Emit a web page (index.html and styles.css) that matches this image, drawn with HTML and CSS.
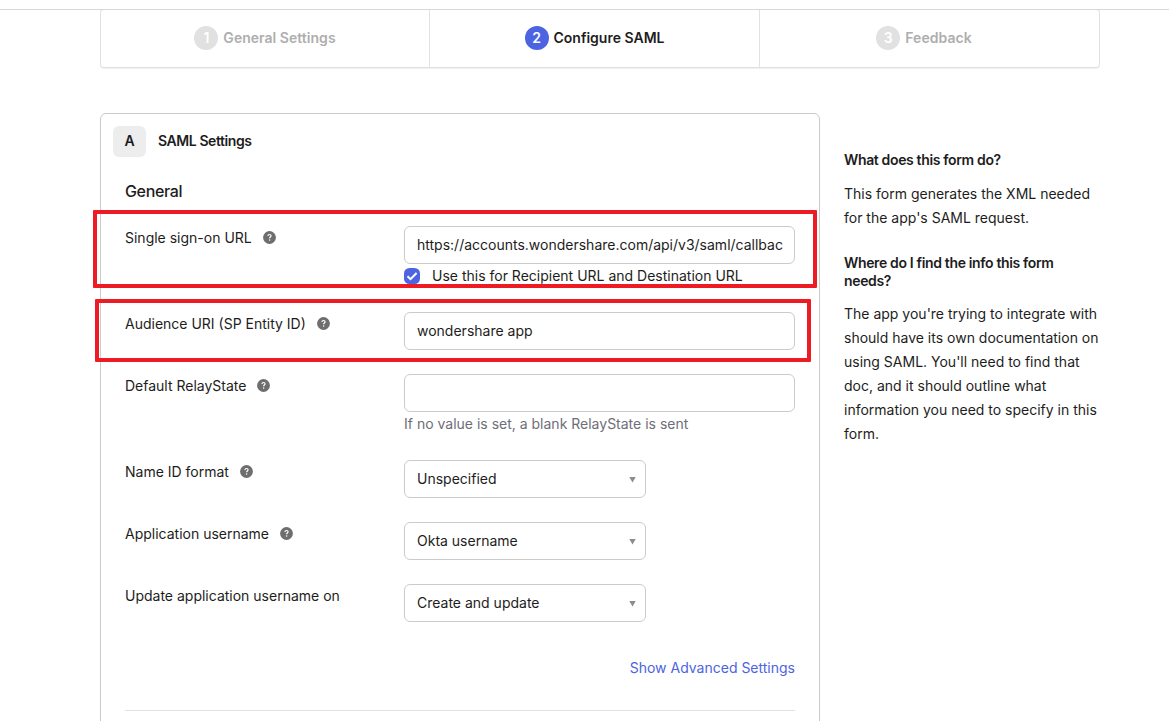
FILE: index.html
```html
<!DOCTYPE html>
<html lang="en">
<head>
<meta charset="utf-8">
<title>Configure SAML</title>
<link rel="stylesheet" href="styles.css">
</head>
<body>
<svg class="defs" aria-hidden="true">
  <symbol id="help" viewBox="0 0 13 13">
    <circle cx="6.5" cy="6.5" r="6.4" fill="#6e6e6e"/>
    <path d="M4.9 5C5 4 5.700 3.500 6.500 3.500c1 0 1.600.5 1.600 1.300 0 1.100-1.500 1.200-1.500 2.400" fill="none" stroke="#fff" stroke-width="1.2"/>
    <circle cx="6.6" cy="9" r=".75" fill="#fff"/>
  </symbol>
</svg>
<div class="page">
  <nav class="steps">
    <div class="step"><span class="num">1</span><span>General Settings</span></div>
    <div class="step active"><span class="num">2</span><span>Configure SAML</span></div>
    <div class="step last"><span class="num">3</span><span>Feedback</span></div>
  </nav>
  <main class="content">
    <section class="panel">
      <header class="panel-head"><span class="letter">A</span><h2>SAML Settings</h2></header>
      <h3>General</h3>
      <div class="row row-sso">
        <label>Single sign-on URL<svg class="help"><use href="#help"/></svg></label>
        <div class="field">
          <div class="input">https://accounts.wondershare.com/api/v3/saml/callbac</div>
          <div class="check"><svg class="box" viewBox="0 0 16 16"><rect width="16" height="16" rx="5.500" fill="#4c64e1"/><path d="M3.500 8.200l3 3L12.600 5" fill="none" stroke="#fff" stroke-width="2"/></svg><span>Use this for Recipient URL and Destination URL</span></div>
        </div>
        <div class="mark mark-sso"></div>
      </div>
      <div class="row">
        <label>Audience URI (SP Entity ID)<svg class="help"><use href="#help"/></svg></label>
        <div class="field"><div class="input">wondershare app</div></div>
        <div class="mark mark-audience"></div>
      </div>
      <div class="row row-relay">
        <label>Default RelayState<svg class="help"><use href="#help"/></svg></label>
        <div class="field"><div class="input"></div><p class="hint">If no value is set, a blank RelayState is sent</p></div>
      </div>
      <div class="row">
        <label>Name ID format<svg class="help"><use href="#help"/></svg></label>
        <div class="field"><div class="input select"><span>Unspecified</span><i class="caret"></i></div></div>
      </div>
      <div class="row">
        <label>Application username<svg class="help"><use href="#help"/></svg></label>
        <div class="field"><div class="input select"><span>Okta username</span><i class="caret"></i></div></div>
      </div>
      <div class="row">
        <label>Update application username on</label>
        <div class="field"><div class="input select"><span>Create and update</span><i class="caret"></i></div></div>
      </div>
      <div class="advanced"><a>Show Advanced Settings</a></div>
    </section>
    <aside class="info">
      <h4>What does this form do?</h4>
      <p>This form generates the XML needed<br>for the app's SAML request.</p>
      <h4 class="second">Where do I find the info this form<br>needs?</h4>
      <p class="long">The app you're trying to integrate with<br>should have its own documentation on<br>using SAML. You'll need to find that<br>doc, and it should outline what<br>information you need to specify in this<br>form.</p>
    </aside>
  </main>
</div>
</body>
</html>
```
FILE: styles.css
```css
* { box-sizing: border-box; }
body { margin: 0; height: 721px; overflow: hidden; background: #fff; color: #1d1d21; font: 14px/24px Inter, sans-serif; }
h2, h3, h4, p { margin: 0; }
.defs { display: none; }
.page { height: 712px; margin-top: 9px; border-top: 1px solid #d7d7dc; }
.steps { display: grid; grid-template-columns: 328px 330px 340px; width: 1000px; height: 59px; margin: -1px 0 0 100px; border: 1px solid #e1e1e1; border-top-color: #d7d7dc; border-radius: 4px; box-shadow: 0 1px 0 #f1f1f1; }
.step { display: flex; align-items: center; justify-content: center; gap: 5px; padding-bottom: 1px; color: #aeaeae; font-weight: 600; letter-spacing: 0.03px; }
.step + .step { border-left: 1px solid #e1e1e1; }
.last { padding-right: 11px; }
.num { width: 24px; height: 24px; border-radius: 50%; background: #e1e1e1; color: #fff; text-align: center; }
.active { color: #1d1d21; letter-spacing: 0; }
.active .num { background: #4c64e1; }
.content { display: flex; margin: 45px 0 0 100px; }
.panel { width: 720px; height: 620px; padding: 12px 24px 0; border: 1px solid #cbcbcb; border-radius: 6px; }
.panel-head { display: flex; align-items: center; gap: 12px; height: 31px; margin-left: -12px; }
.letter { width: 33px; height: 31px; border-radius: 6px; background: #ededed; text-align: center; line-height: 30px; font-weight: 600; }
h2, h4 { font-size: 14px; line-height: 18px; font-weight: 600; letter-spacing: -0.35px; }
h2 { padding-bottom: 2px; letter-spacing: -0.42px; }
h3 { margin-top: 22px; font-size: 16px; line-height: 24px; font-weight: 500; letter-spacing: -0.35px; }
.row { position: relative; display: flex; height: 62px; }
.row-sso { height: 86px; margin-top: 23px; }
.row-relay { height: 86px; }
label { display: flex; align-items: center; width: 279px; height: 24px; }
.help { width: 13px; height: 13px; margin: 0 0 1px 11px; }
.field { width: 391px; }
.input { height: 38px; padding: 0 12px; border: 1px solid #cbcbcb; border-radius: 6px; line-height: 36px; white-space: nowrap; }
.select { display: flex; align-items: center; justify-content: space-between; width: 242px; padding-right: 9px; }
.caret { width: 7px; height: 6px; margin-top: 1px; background: #8c8c8c; clip-path: polygon(0 0, 100% 0, 50% 100%); }
.check { display: flex; align-items: center; gap: 12px; height: 24px; }
.box { width: 16px; height: 16px; }
.hint { color: #6e6e78; }
.mark { position: absolute; border: 4px solid #ed1c24; border-radius: 1px; }
.mark-sso { left: -32px; top: -16px; width: 724px; height: 78px; }
.mark-audience { left: -30px; top: -13px; width: 716px; height: 63px; }
.advanced { display: flex; justify-content: flex-end; height: 55px; margin-top: 10px; border-bottom: 1px solid #e1e1e1; color: #4c64e1; }
.info { padding: 38px 0 0 24px; }
.info p { margin-top: 13px; }
.info .long { margin-top: 12px; }
.info .second { margin-top: 24px; }
```
